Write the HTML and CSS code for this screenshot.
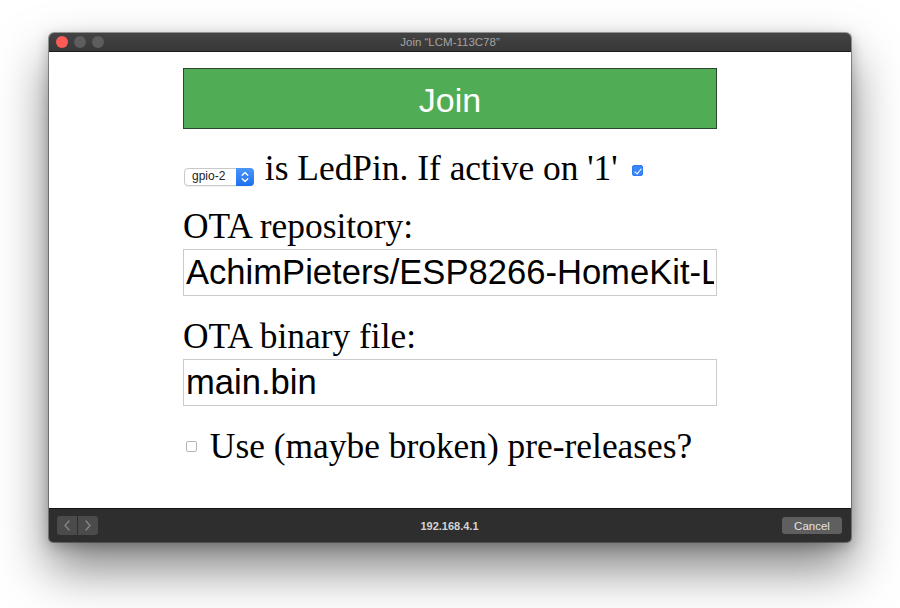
FILE: index.html
```html
<!DOCTYPE html>
<html lang="en">
<head>
    <meta charset="UTF-8">
    <meta name="viewport" content="width=device-width, initial-scale=1.0">
    <title>Join LCM-113C78</title>
    <link rel="stylesheet" href="styles.css">
</head>
<body>

    <div class="window">
        <div class="titlebar">
            <div class="lights">
                <span class="light close"></span>
                <span class="light"></span>
                <span class="light"></span>
            </div>
            <div class="title">Join “LCM-113C78”</div>
        </div>

        <div class="webview">
            <form class="setup" onsubmit="return false">
                <button type="submit" class="join-btn">Join</button>

                <div class="row">
                    <span class="pick">
                        <select class="pin-select" name="led">
                            <option>gpio-2</option>
                        </select>
                        <span class="stepper">
                            <svg width="18" height="18" viewBox="0 0 18 18">
                                <path d="M6.2 7.3 L9 4.5 L11.8 7.3" fill="none" stroke="#fff" stroke-width="1.3" stroke-linecap="round" stroke-linejoin="round"/>
                                <path d="M6.2 10.7 L9 13.5 L11.8 10.7" fill="none" stroke="#fff" stroke-width="1.3" stroke-linecap="round" stroke-linejoin="round"/>
                            </svg>
                        </span>
                    </span>
                    is LedPin. If active on '1' <input type="checkbox" class="tick tick-top" name="pol" checked>
                </div>

                <label class="field-label" for="repo">OTA repository:</label>
                <input type="text" class="field" id="repo" name="repo" value="AchimPieters/ESP8266-HomeKit-LED">

                <label class="field-label" for="file">OTA binary file:</label>
                <input type="text" class="field" id="file" name="file" value="main.bin">

                <div class="row row-last">
                    <input type="checkbox" class="tick tick-pre" name="pre"> Use (maybe broken) pre-releases?
                </div>
            </form>
        </div>

        <div class="bottombar">
            <div class="nav">
                <span class="nav-btn">
                    <svg width="20" height="19" viewBox="0 0 20 19">
                        <path d="M12 5 L8 9.5 L12 14" fill="none" stroke="#858585" stroke-width="1.4" stroke-linecap="round" stroke-linejoin="round"/>
                    </svg>
                </span>
                <span class="nav-btn">
                    <svg width="20" height="19" viewBox="0 0 20 19">
                        <path d="M8 5 L12 9.5 L8 14" fill="none" stroke="#858585" stroke-width="1.4" stroke-linecap="round" stroke-linejoin="round"/>
                    </svg>
                </span>
            </div>
            <div class="address">192.168.4.1</div>
            <button type="button" class="cancel-btn">Cancel</button>
        </div>
    </div>

</body>
</html>
```

FILE: styles.css
```css
html, body {
    height: 100%;
}

body {
    margin: 0;
    background: #fff;
    font-family: "Liberation Serif", "Times New Roman", serif;
    overflow: hidden;
}

/* mac style sheet window */
.window {
    width: 802px;
    height: 509px;
    margin: 33px auto 0;
    display: flex;
    flex-direction: column;
    border-radius: 5px 5px 4px 4px;
    overflow: hidden;
    box-shadow: 0 0 0 1px rgba(0, 0, 0, 0.35), 0 26px 50px rgba(0, 0, 0, 0.5), 0 4px 14px rgba(0, 0, 0, 0.25);
}

.titlebar {
    height: 18px;
    display: grid;
    grid-template-columns: 1fr auto 1fr;
    align-items: center;
    background: linear-gradient(#434343, #383838);
    border-bottom: 1px solid #1c1c1c;
}

.lights {
    display: flex;
    gap: 6px;
    padding-left: 7px;
}

.light {
    width: 12px;
    height: 12px;
    border-radius: 50%;
    background: #5d5d5d;
}

.light.close {
    background: #fc5b57;
}

.title {
    font-family: "Liberation Sans", Arial, sans-serif;
    font-size: 11.5px;
    color: #a3a3a3;
}

.webview {
    flex: 1;
    background: #fff;
}

.setup {
    width: 534px;
    margin: 0 auto;
    padding-top: 16px;
    font-size: 35.4px;
    line-height: 40px;
    color: #000;
}

.join-btn {
    display: block;
    width: 100%;
    height: 61px;
    background-color: #51ad55;
    border: 1px solid #2a472b;
    color: #fff;
    font-family: "Liberation Sans", Arial, sans-serif;
    font-size: 34px;
    padding: 4px 0 0;
    cursor: pointer;
}

.row {
    margin-top: 19px;
    white-space: nowrap;
}

.row-last {
    margin-top: 20px;
}

/* small native-looking popup */
.pick {
    position: relative;
    display: inline-flex;
    margin-left: 1px;
    margin-right: 2px;
    line-height: normal;
}

.pin-select {
    appearance: none;
    -webkit-appearance: none;
    width: 70px;
    height: 18px;
    padding: 0 0 1px 7px;
    border: 1px solid #c9c9c9;
    border-radius: 4px;
    background: #fff;
    font-family: "Liberation Sans", Arial, sans-serif;
    font-size: 12px;
    color: #222;
    box-shadow: 0 1px 1px rgba(0, 0, 0, 0.06);
}

.stepper {
    position: absolute;
    right: 0;
    top: 0;
    width: 18px;
    height: 18px;
    display: flex;
    border-radius: 0 4px 4px 0;
    background: linear-gradient(#4a97f8, #1f6ef0);
}

.tick {
    appearance: none;
    -webkit-appearance: none;
    position: relative;
    width: 11px;
    height: 11px;
    margin: 0 3px 0 5px;
    border: 1px solid #b5b5b5;
    border-radius: 2px;
    background: #fff;
    box-sizing: border-box;
}

.tick-top {
    vertical-align: 4px;
}

.tick-pre {
    margin-left: 3px;
    margin-right: 4px;
    vertical-align: 6px;
}

.tick:checked {
    border-color: #2d7cf6;
    background: #3a86f7;
}

.tick:checked::after {
    content: "";
    position: absolute;
    left: 3px;
    top: 1px;
    width: 3px;
    height: 6px;
    border: solid #fff;
    border-width: 0 1.5px 1.5px 0;
    transform: rotate(40deg);
}

.field-label {
    display: block;
    margin-top: 18px;
}

.field {
    display: block;
    width: 100%;
    height: 47px;
    margin-top: 3px;
    padding: 0 2px;
    box-sizing: border-box;
    border: 1px solid #cbcbcb;
    font-family: "Liberation Sans", Arial, sans-serif;
    font-size: 34.6px;
    color: #000;
    outline: none;
}

.field + .field-label {
    margin-top: 20px;
}

.bottombar {
    height: 33px;
    display: grid;
    grid-template-columns: 1fr auto 1fr;
    align-items: center;
    padding: 0 9px 0 8px;
    background: #2e2e2e;
    border-top: 1px solid #141414;
    font-family: "Liberation Sans", Arial, sans-serif;
}

.nav {
    display: flex;
    gap: 1px;
}

.nav-btn {
    width: 20px;
    height: 19px;
    display: flex;
    background: #4b4b4b;
}

.nav-btn:first-child {
    border-radius: 3px 0 0 3px;
}

.nav-btn:last-child {
    border-radius: 0 3px 3px 0;
}

.address {
    font-size: 11px;
    font-weight: bold;
    color: #d4d4d4;
}

.cancel-btn {
    justify-self: end;
    width: 60px;
    height: 17px;
    padding: 0;
    border: none;
    border-radius: 3px;
    background: #5f5f5f;
    color: #e4e4e4;
    font-family: "Liberation Sans", Arial, sans-serif;
    font-size: 11.5px;
}
```
